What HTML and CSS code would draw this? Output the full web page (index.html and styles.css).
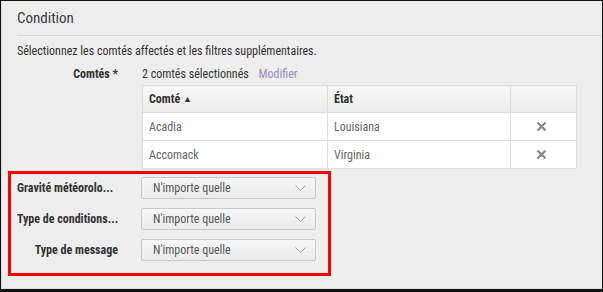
FILE: index.html
```html
<!DOCTYPE html>
<html lang="fr">
<head>
    <meta charset="UTF-8">
    <title>Condition</title>
    <link rel="stylesheet" href="styles.css">
</head>
<body>
    <div class="frame">
        <div class="panel">
            <h2 class="panel-title">Condition</h2>

            <p class="intro">Sélectionnez les comtés affectés et les filtres supplémentaires.</p>

            <div class="field field-counties">
                <span class="field-label">Comtés *</span>
                <div class="field-body">
                    <span class="selected-count">2 comtés sélectionnés</span>
                    <a class="edit-link" href="#">Modifier</a>
                </div>
            </div>

            <table class="county-table">
                <thead>
                    <tr>
                        <th class="col-county">Comté <span class="sort">&#9650;</span></th>
                        <th class="col-state">État</th>
                        <th class="col-remove"></th>
                    </tr>
                </thead>
                <tbody>
                    <tr>
                        <td>Acadia</td>
                        <td>Louisiana</td>
                        <td class="remove">
                            <svg width="11" height="11" viewBox="0 0 11 11"><path d="M1.5 1.5 L9.5 9.5 M9.5 1.5 L1.5 9.5" stroke="#8a8a8a" stroke-width="2.4"/></svg>
                        </td>
                    </tr>
                    <tr>
                        <td>Accomack</td>
                        <td>Virginia</td>
                        <td class="remove">
                            <svg width="11" height="11" viewBox="0 0 11 11"><path d="M1.5 1.5 L9.5 9.5 M9.5 1.5 L1.5 9.5" stroke="#8a8a8a" stroke-width="2.4"/></svg>
                        </td>
                    </tr>
                </tbody>
            </table>

            <div class="filters">
                <div class="field">
                    <span class="field-label trunc">Gravité météorolo...</span>
                    <div class="select">
                        <span>N'importe quelle</span>
                        <svg width="11" height="7" viewBox="0 0 11 7"><path d="M0.5 0.5 L5.5 5.5 L10.5 0.5" fill="none" stroke="#a0a0a0" stroke-width="1"/></svg>
                    </div>
                </div>
                <div class="field">
                    <span class="field-label trunc">Type de conditions...</span>
                    <div class="select">
                        <span>N'importe quelle</span>
                        <svg width="11" height="7" viewBox="0 0 11 7"><path d="M0.5 0.5 L5.5 5.5 L10.5 0.5" fill="none" stroke="#a0a0a0" stroke-width="1"/></svg>
                    </div>
                </div>
                <div class="field">
                    <span class="field-label">Type de message</span>
                    <div class="select">
                        <span>N'importe quelle</span>
                        <svg width="11" height="7" viewBox="0 0 11 7"><path d="M0.5 0.5 L5.5 5.5 L10.5 0.5" fill="none" stroke="#a0a0a0" stroke-width="1"/></svg>
                    </div>
                </div>
            </div>
        </div>
    </div>
</body>
</html>
```
FILE: styles.css
```css
* {
    box-sizing: border-box;
}

body {
    margin: 0;
    font-family: "Roboto Condensed", "Liberation Sans Narrow", sans-serif;
    font-size: 12px;
    color: #333;
    background-color: #eee;
}

.frame {
    width: 603px;
    height: 292px;
    border-top: 1px solid #111;
    border-left: 1px solid #111;
    border-right: 1px solid #111;
    border-bottom: 3px solid #111;
    overflow: hidden;
}

.panel {
    height: 100%;
    padding-left: 15px;
    border-left: 1px solid #ddd;
    border-bottom: 1px solid #ddd;
    background-color: #eee;
}

.panel-title {
    margin: 0;
    padding: 7px 0;
    font-size: 15px;
    font-weight: normal;
    line-height: 20px;
    color: #3a3a3a;
    border-bottom: 1px solid #d8d8d8;
}

.intro {
    margin: 7px 0 0;
    line-height: 16px;
}

.field {
    display: flex;
    align-items: flex-start;
}

.field-label {
    width: 124px;
    padding-right: 23px;
    text-align: right;
    font-weight: bold;
    white-space: nowrap;
}

.field-label.trunc {
    padding-right: 14px;
    text-align: left;
}

.field-counties {
    margin-top: 7px;
    line-height: 16px;
}

.field-body {
    padding-left: 1px;
}

.edit-link {
    margin-left: 7px;
    color: #9a8cc2;
    text-decoration: none;
}

.county-table {
    margin: 3px 0 0 125px;
    width: 435px;
    border-collapse: collapse;
    background-color: #fff;
}

.county-table th,
.county-table td {
    border: 1px solid #ddd;
    padding: 0 6px;
    text-align: left;
}

.county-table th {
    height: 27px;
    font-weight: bold;
    color: #333;
    background: linear-gradient(#f8f8f8, #ededed);
}

.county-table td {
    height: 28px;
    color: #666;
}

.col-county {
    width: 185px;
}

.col-state {
    width: 183px;
}

.sort {
    font-size: 9px;
    vertical-align: 1px;
}

.county-table td.remove {
    text-align: center;
    padding: 3px 4px 0 0;
}

.filters {
    width: 323px;
    margin: 2px 0 0 -9px;
    padding: 3px 6px 12px;
    border: 3px solid #ff0000;
}

.filters .field {
    margin-bottom: 9px;
}

.filters .field:last-child {
    margin-bottom: 0;
}

.filters .field-label {
    padding-top: 3px;
    line-height: 16px;
}

.select {
    display: flex;
    align-items: center;
    justify-content: space-between;
    width: 175px;
    height: 22px;
    padding: 0 9px 0 11px;
    border: 1px solid #c8c8c8;
    border-radius: 2px;
    color: #555;
    background: linear-gradient(#f7f7f7, #ebebeb);
}
```
